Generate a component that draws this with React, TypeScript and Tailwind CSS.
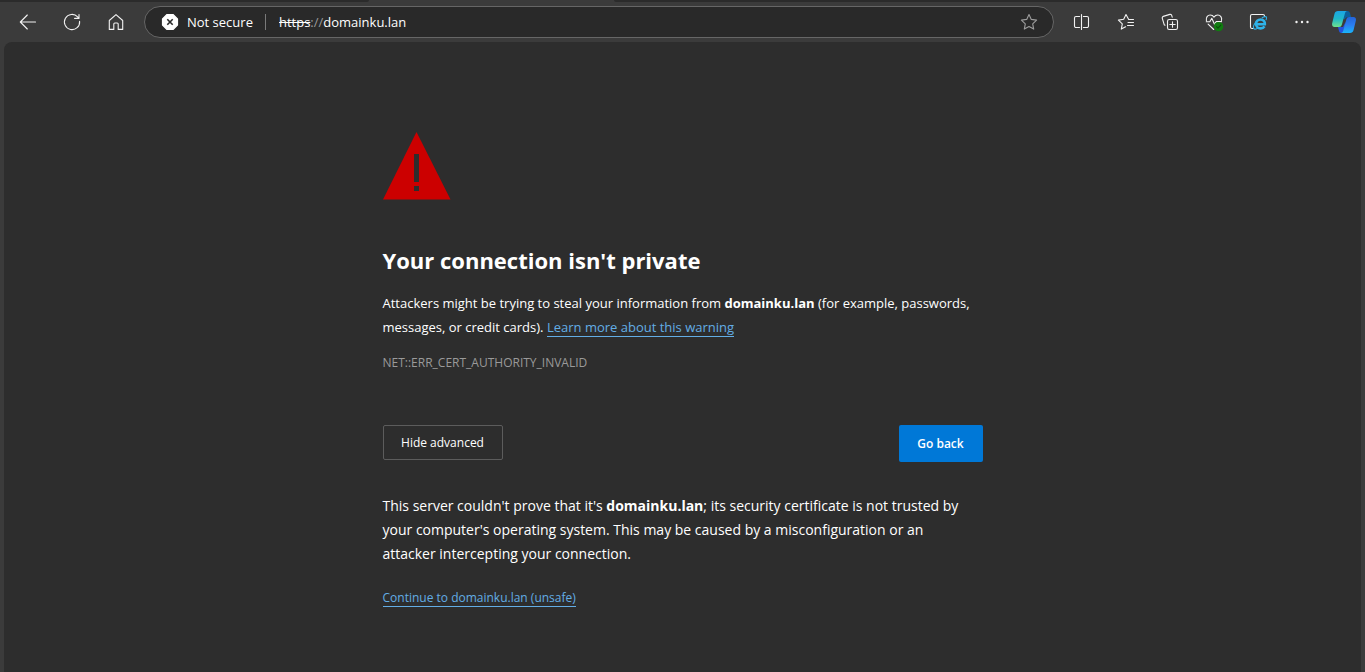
import React from 'react';

interface ToolButtonProps {
    label: string;
    children: React.ReactNode;
}

const ToolButton: React.FC<ToolButtonProps> = ({ label, children }) => (
    <button type="button" aria-label={label} className="flex h-8 w-11 shrink-0 items-center justify-center rounded text-[#f2f2f2] hover:bg-white/10">
        <svg viewBox="0 0 20 20" fill="none" stroke="currentColor" strokeWidth="1.1" strokeLinecap="round" strokeLinejoin="round" className="h-5 w-5">
            {children}
        </svg>
    </button>
);

const TabStrip: React.FC = () => (
    <div className="flex h-[2px] bg-[#3b3b3b]">
        <div className="w-[27%] rounded-br bg-[#2b2b2b]" />
        <div className="w-[18%]" />
        <div className="flex-1 rounded-bl bg-[#2b2b2b]" />
    </div>
);

const AddressBar: React.FC = () => (
    <div className="mx-[6px] flex h-8 min-w-0 flex-1 items-center rounded-full border border-[#666666] bg-[#292929] pl-4 pr-[14px] text-[13px] text-white">
        <svg viewBox="0 0 18 18" className="h-[18px] w-[18px] shrink-0" aria-hidden="true">
            <path d="M6 1.500h6L16.500 6v6L12 16.500H6L1.500 12V6z" fill="#fff" stroke="#fff" strokeWidth="1.200" strokeLinejoin="round" />
            <path d="M6.300 6.300l5.400 5.400M11.700 6.300l-5.400 5.400" stroke="#292929" strokeWidth="1.600" />
        </svg>
        <button type="button" className="ml-2 shrink-0 pt-px">Not secure</button>
        <span className="ml-3 h-4 w-px shrink-0 bg-[#7a7a7a]" />
        <div className="ml-[13px] min-w-0 flex-1 truncate pt-px">
            <span className="line-through">https</span>
            <span className="text-[#9a9a9a]">://</span>
            <span>domainku.lan</span>
        </div>
        <button type="button" aria-label="Add this page to favorites" className="text-[#9c9c9c]">
            <svg viewBox="0 0 20 20" fill="none" stroke="currentColor" strokeWidth="1.1" strokeLinejoin="round" className="h-5 w-5">
                <path d="M10 2.5l2.3 4.9 5.3.7-3.9 3.7 1 5.3L10 14.5l-4.7 2.6 1-5.3-3.9-3.7 5.3-.7z" />
            </svg>
        </button>
    </div>
);

const Toolbar: React.FC = () => (
    <header className="flex h-10 items-center bg-[#3b3b3b] pl-[6px]">
        <ToolButton label="Back">
            <path d="M17.5 10H2.5M9.3 3L2.3 10l7 7" />
        </ToolButton>
        <ToolButton label="Refresh">
            <path d="M17.6 9.2A7.6 7.6 0 1 1 15.6 4.8L17 6.3M17 2.5v3.9h-4.4" />
        </ToolButton>
        <ToolButton label="Home">
            <path d="M3.3 8.5L10 2.6l6.7 5.900v8.900h-4.500V12a1 1 0 0 0-1-1H8.800a1 1 0 0 0-1 1v5.400H3.300z" />
        </ToolButton>
        <AddressBar />
        <ToolButton label="Split screen">
            <path d="M7.6 4.5H4a1.5 1.5 0 0 0-1.5 1.5v8A1.5 1.5 0 0 0 4 15.5h3.6M11.400 4.5H15A1.5 1.5 0 0 1 16.5 6v8a1.5 1.5 0 0 1-1.5 1.5h-3.600M9.5 2.5v15" />
        </ToolButton>
        <ToolButton label="Favorites">
            <path d="M17.5 7.5h-4.8L10 2.5 7.7 7.3l-5.3.8 3.9 3.7-1 5.3 4.3-2.3M12 10.5h5.5M11.5 13.5h6" />
        </ToolButton>
        <ToolButton label="Collections">
            <rect x="7.5" y="7.5" width="10" height="10" rx="1.8" />
            <path d="M12.5 9.8v5.4M9.8 12.5h5.4M5 13.2l-.8-.5-1.9-6.4a1.5 1.5 0 0 1 1-1.9l6.5-2a1.5 1.5 0 0 1 1.9 1l.5 1.7" />
        </ToolButton>
        <ToolButton label="Browser essentials">
            <path d="M2.4 8.6C1.8 5.5 3.6 3 6.2 3c1.8 0 3 .9 3.8 2.1C10.8 3.9 12 3 13.8 3c2.6 0 4.4 2.5 3.7 5.4M4.1 12.2l5.6 5.3M2.3 9.8h3.5l2-3.5 2.7 6 1.7-2.7h5.3" />
            <circle cx="14.6" cy="14.600" r="4.700" fill="#107c10" stroke="none" />
            <path d="M12.500 14.700l1.500 1.500 2.800-3" stroke="#0a4f0a" />
        </ToolButton>
        <ToolButton label="Reload in Internet Explorer mode">
            <path d="M5.200 16.500H4a1.500 1.500 0 0 1-1.500-1.500V4A1.500 1.500 0 0 1 4 2.500h11A1.500 1.500 0 0 1 16.500 4v.500" />
            <path d="M8 12.300h8.900c.2-3-1.600-4.800-4.300-4.800-2.600 0-4.500 1.900-4.500 4.400s1.900 4.500 4.600 4.500c1.700 0 3-.7 3.800-2" stroke="#2eb2e8" strokeWidth="2.600" strokeLinecap="butt" />
            <path d="M14.200 5.800c2-1.300 3.700-1.500 4.200-.7.300.6.200 1.500-.3 2.600M7.800 10c-2 2.700-2.900 5.600-1.900 6.700.6.700 2 .4 3.700-.5" stroke="#2eb2e8" />
        </ToolButton>
        <ToolButton label="Settings and more">
            <g fill="currentColor" stroke="none">
                <circle cx="4.500" cy="10" r="1.200" />
                <circle cx="10" cy="10" r="1.200" />
                <circle cx="15.500" cy="10" r="1.200" />
            </g>
        </ToolButton>
        <button type="button" aria-label="Copilot" className="flex h-8 w-[41px] shrink-0 items-center pl-2">
            <svg viewBox="0 0 24 24" className="h-6 w-6">
                <defs>
                    <linearGradient id="teal" x1="0" y1="0" x2="0" y2="1">
                        <stop offset="0" stopColor="#1ba5e5" />
                        <stop offset=".5" stopColor="#20b8c9" />
                        <stop offset="1" stopColor="#6fe38c" />
                    </linearGradient>
                    <linearGradient id="blue" x1="0" y1="0" x2="0" y2="1">
                        <stop offset="0" stopColor="#2464d9" />
                        <stop offset=".5" stopColor="#2b7df0" />
                        <stop offset="1" stopColor="#19b5fa" />
                    </linearGradient>
                </defs>
                <path d="M12 1h3.6c1.2 0 2 .8 2.4 2l1 4h-3c-1.8 0-2.7 1-3.2 2.6L10 8z" fill="#0b5f9c" />
                <path d="M6 17h5l2.5-5 .5 11H9.3c-1.2 0-1.9-.8-2.3-2z" fill="#2453dd" />
                <path d="M6 1h9.200c-1.200.2-1.900 1.200-2.300 2.500l-3 11C9.400 16.200 8.500 17 7 17H2.500C.6 17-.2 15.600.1 13.500L2.500 3.700C3 2 4.200 1 6 1z" fill="url(#teal)" />
                <path d="M18 23H9c1.200-.2 1.900-1.200 2.300-2.500l3-11C14.800 7.800 15.600 7 17.100 7h4.400c2 0 2.700 1.400 2.400 3.500l-2.400 9.800C21 22 19.800 23 18 23z" fill="url(#blue)" />
            </svg>
        </button>
    </header>
);

const linkClass = 'border-b border-[#63ade5] text-[#63ade5] hover:text-[#8cc4ef]';

const WarningPage: React.FC = () => (
    <main className="mx-1 flex-1 rounded-t-lg bg-[#2d2d2d] px-6 pb-12 pt-[90px]">
        <div className="mx-auto max-w-[600px]">
            <svg viewBox="0 0 68 68" className="h-[68px] w-[68px]" role="img" aria-label="Warning">
                <path d="M33.500 0L67.500 67.500H0z" fill="#cc0000" />
                <path d="M31 22h5v28h-5zM31 54h5v5h-5z" fill="#2d2d2d" />
            </svg>
            <h1 className="mt-11 text-[22px] font-bold leading-8">Your connection isn't private</h1>
            <p className="mt-[15px] text-[13px] leading-6">
                Attackers might be trying to steal your information from <strong>domainku.lan</strong> (for example, passwords, messages, or credit cards).{' '}
                <a href="#learn" className={linkClass}>Learn more about this warning</a>
            </p>
            <p className="mt-4 text-[12px] leading-4 text-[#9a9a9a]">NET::ERR_CERT_AUTHORITY_INVALID</p>
            <div className="mt-[54px] flex items-start justify-between text-[12px]">
                <button type="button" className="h-[35px] w-[120px] rounded-xs border border-[#5c5c5c] hover:bg-white/5">Hide advanced</button>
                <button type="button" className="h-[37px] w-[84px] rounded-xs bg-[#0078d7] font-semibold hover:bg-[#1a86db]">Go back</button>
            </div>
            <p className="mt-8 pr-4 text-[14px] leading-6">
                This server couldn't prove that it's <strong>domainku.lan</strong>; its security certificate is not trusted by your computer's operating system. This may be caused by a misconfiguration or an attacker intercepting your connection.
            </p>
            <p className="mt-5 text-[12px] leading-6">
                <a href="#proceed" className={linkClass}>Continue to domainku.lan (unsafe)</a>
            </p>
        </div>
    </main>
);

export default function App() {
    return (
        <div className="flex min-h-screen flex-col bg-[#3b3b3b] font-['Open_Sans',sans-serif] text-white">
            <TabStrip />
            <Toolbar />
            <WarningPage />
        </div>
    );
}
